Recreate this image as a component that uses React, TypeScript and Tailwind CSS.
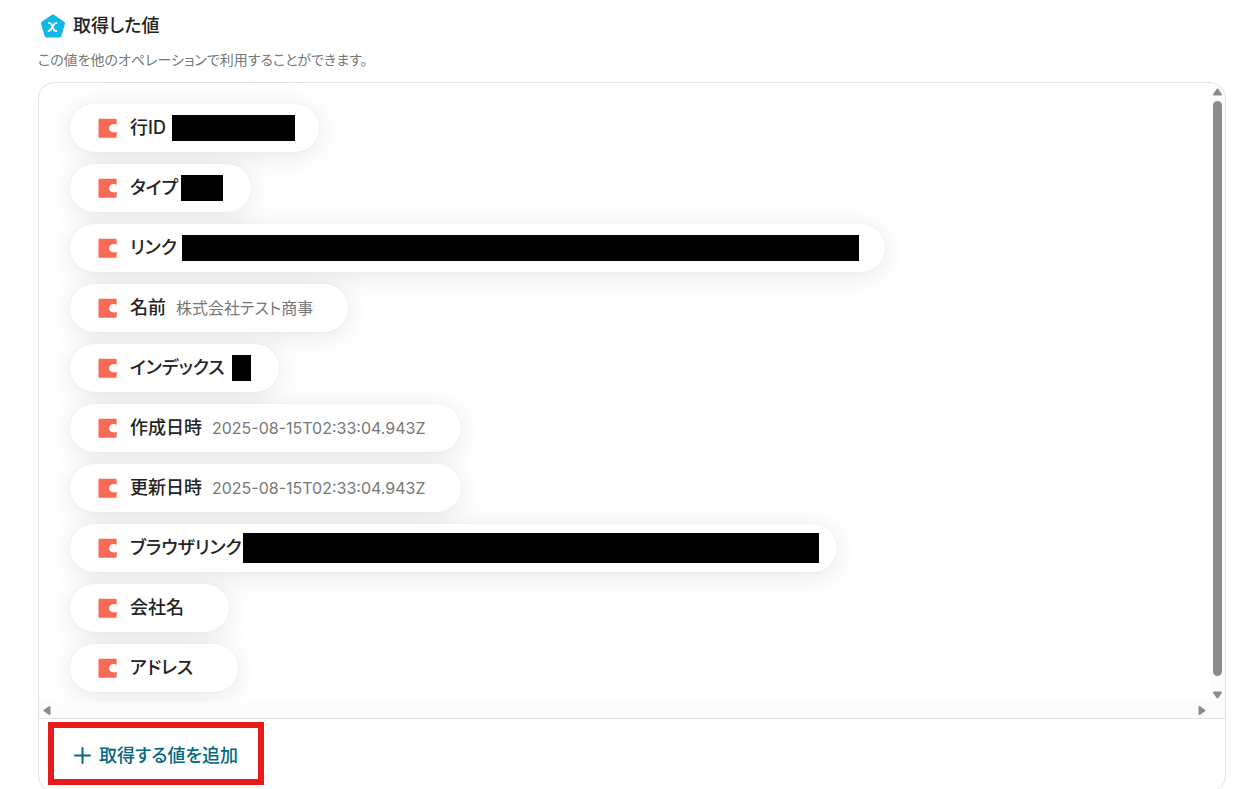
import React from "react";
import { clsx } from "clsx";

type Field = {
    label: string;
    value?: string;
    // clases de la barra que tapa el valor
    mask?: string;
};

const fields: Field[] = [
    { label: "行ID", mask: "ml-1.5 mr-6 h-[26px] w-[123px]" },
    { label: "タイプ", mask: "ml-[3px] mr-7 h-[26px] w-[42px]" },
    { label: "リンク", mask: "ml-[5px] mr-[26px] h-[26px] w-[677px]" },
    { label: "名前", value: "株式会社テスト商事" },
    { label: "インデックス", mask: "ml-[7px] mr-7 h-[26px] w-[19px]" },
    { label: "作成日時", value: "2025-08-15T02:33:04.943Z" },
    { label: "更新日時", value: "2025-08-15T02:33:04.943Z" },
    { label: "ブラウザリンク", mask: "ml-px mr-[18px] h-[30px] w-[576px]" },
    { label: "会社名", value: "" },
    { label: "アドレス", value: "" },
];

export default function App() {
    return (
        <main className="bg-white pt-3 pr-2 pl-[38px] font-['Inter','Noto_Sans_CJK_JP',sans-serif] text-[#222] [font-feature-settings:'palt']">
            <header>
                <h1 className="flex items-center gap-1.5 text-lg leading-7 font-medium">
                    <VariableIcon />
                    取得した値
                </h1>
                <p className="mt-2 text-sm leading-6 text-[#777]">
                    この値を他のオペレーションで利用することができます。
                </p>
            </header>

            <section className="mt-2.5 overflow-hidden rounded-2xl border border-[#e2e2e2]">
                <div className="flex">
                    <ul className="flex min-w-0 flex-1 flex-col items-start gap-3 overflow-hidden pt-[21px] pb-2.5 pl-[31px]">
                        {fields.map((f) => (
                            <FieldChip key={f.label} field={f} />
                        ))}
                    </ul>
                    <VerticalScrollbar />
                </div>
                <HorizontalScrollbar />
                <footer className="flex border-t border-[#e2e2e2] pt-[3px] pb-1.5 pl-[9px]">
                    <div className="border-6 border-[#e81b1b]">
                        <button
                            type="button"
                            className="flex h-[51px] items-center gap-2 px-5 pt-1 text-lg font-medium text-[#046882]"
                        >
                            <PlusIcon />
                            取得する値を追加
                        </button>
                    </div>
                </footer>
            </section>
        </main>
    );
}

function FieldChip({ field }: { field: Field }) {
    return (
        <li className="flex h-12 items-center rounded-full bg-white pl-7 shadow-[0_4px_28px_rgba(0,0,0,0.1),0_0_2px_rgba(0,0,0,0.06)]">
            <CodaIcon />
            <span className="ml-3 text-lg leading-6 font-medium whitespace-nowrap">
                {field.label}
            </span>
            {field.mask ? (
                <span className={clsx("shrink-0 bg-black", field.mask)} />
            ) : (
                <span className="mr-[35px] ml-2.5 text-base leading-6 whitespace-nowrap text-[#777]">
                    {field.value}
                </span>
            )}
        </li>
    );
}

function VerticalScrollbar() {
    return (
        <div className="flex w-[15px] shrink-0 flex-col items-center bg-[#fcfcfc] pt-1 pb-0.5">
            <svg width="11" height="10" viewBox="0 0 11 10" fill="#8b8b8b">
                <path d="M5.5 2.5 9 7.5H2Z" stroke="#8b8b8b" strokeWidth="2" strokeLinejoin="round" />
            </svg>
            <div className="mt-1 mb-3.5 w-[9px] flex-1 rounded-full bg-[#8b8b8b]" />
            <svg width="11" height="10" viewBox="0 0 11 10" fill="#8b8b8b">
                <path d="M5.5 7.5 9 2.5H2Z" stroke="#8b8b8b" strokeWidth="2" strokeLinejoin="round" />
            </svg>
        </div>
    );
}

function HorizontalScrollbar() {
    return (
        <div className="flex h-4 items-center justify-between bg-[#fcfcfc] pr-[18px] pl-[3px]">
            <svg width="10" height="11" viewBox="0 0 10 11" fill="#8b8b8b">
                <path d="M2.5 5.5 7.5 2V9Z" stroke="#8b8b8b" strokeWidth="2" strokeLinejoin="round" />
            </svg>
            <svg width="10" height="11" viewBox="0 0 10 11" fill="#8b8b8b">
                <path d="M7.5 5.5 2.5 2V9Z" stroke="#8b8b8b" strokeWidth="2" strokeLinejoin="round" />
            </svg>
        </div>
    );
}

function VariableIcon() {
    return (
        <svg width="29" height="28" viewBox="0 0 29 28" fill="none" aria-hidden="true">
            <path
                d="M15 4.5 25 11.5 21.5 23.5H8.5L5 11.5Z"
                fill="#12b7ea"
                stroke="#12b7ea"
                strokeWidth="4"
                strokeLinejoin="round"
            />
            <path
                d="M10.8 11.2C12.3 10.8 13 11.2 13.6 12.5L15.8 17.6C16.3 18.8 17 19.2 18.5 18.8M18.4 11.2C17.3 11 16.7 11.4 16 12.4L12.8 17.4C12.2 18.5 11.6 18.9 10.5 18.8"
                stroke="#fff"
                strokeWidth="1.8"
                strokeLinecap="round"
            />
        </svg>
    );
}

function CodaIcon() {
    return (
        <svg width="20" height="20" viewBox="0 0 20 20" className="shrink-0" aria-hidden="true">
            <path
                fill="#f76b56"
                d="M1.8.7h15.6c.8 0 1.3.5 1.3 1.3v4.9c-.8-.6-1.7-.9-2.8-.9-2.8 0-4.8 1.9-4.8 4.2s2 4.2 4.8 4.2c1.1 0 2-.3 2.8-.9v5c0 .8-.5 1.3-1.3 1.3H1.8c-.8 0-1.3-.5-1.3-1.3V2C.5 1.2 1 .7 1.8.7Z"
            />
        </svg>
    );
}

function PlusIcon() {
    return (
        <svg width="17" height="17" viewBox="0 0 17 17" aria-hidden="true">
            <path
                d="M8.5 1V16M1 8.5H16"
                stroke="#046882"
                strokeWidth="2"
                strokeLinecap="round"
            />
        </svg>
    );
}
